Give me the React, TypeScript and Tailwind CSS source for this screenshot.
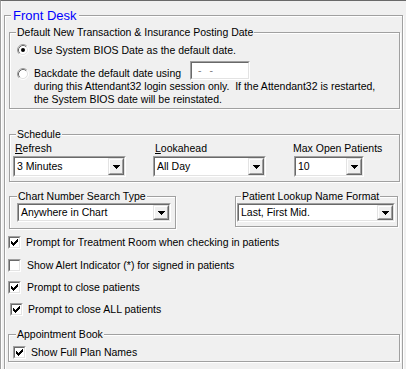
import React from "react";

const sunkenOuter = "border border-t-[#a0a0a0] border-l-[#a0a0a0] border-r-white border-b-white";
const sunkenInner = "border border-t-[#696969] border-l-[#696969] border-r-[#e3e3e3] border-b-[#e3e3e3]";
const etched = "border border-[#a0a0a0] shadow-[1px_1px_0_#fff,inset_1px_1px_0_#fff]";

function Group({ title, className, legendClass, children }: { title: string; className: string; legendClass: string; children: React.ReactNode }) {
  return (
    <div className={etched + " " + className}>
      <div className={"w-fit h-[13px] -mt-[7px] bg-[#f0f0f0] px-[1px] leading-[13px] " + legendClass}>{title}</div>
      {children}
    </div>
  );
}

function Radio({ checked, className }: { checked?: boolean; className?: string }) {
  return (
    <svg width="12" height="12" viewBox="0 0 12 12" className={"shrink-0 " + (className || "")}>
      <circle cx="6" cy="6" r="4.5" fill="#fff" />
      <path d="M2.11 9.89 A5.5 5.5 0 0 1 9.89 2.11" fill="none" stroke="#a0a0a0" />
      <path d="M9.89 2.11 A5.5 5.5 0 0 1 2.11 9.89" fill="none" stroke="#fff" />
      <path d="M2.82 9.18 A4.5 4.5 0 0 1 9.18 2.82" fill="none" stroke="#696969" />
      <path d="M9.18 2.82 A4.5 4.5 0 0 1 2.82 9.18" fill="none" stroke="#e3e3e3" />
      {checked && <circle cx="6" cy="6" r="2" fill="#000" />}
    </svg>
  );
}

// classic 7x7 tick, one 3px run per column
const tick = [2, 3, 4, 3, 2, 1, 0];

function CheckBox({ checked, className }: { checked?: boolean; className?: string }) {
  return (
    <div className={"w-[13px] h-[13px] shrink-0 " + sunkenOuter + " " + (className || "")}>
      <div className={"w-full h-full bg-white flex items-center justify-center " + sunkenInner}>
        {checked && (
          <svg width="7" height="7" viewBox="0 0 7 7" shapeRendering="crispEdges">
            {tick.map((y, x) => (
              <rect key={x} x={x} y={y} width="1" height="3" fill="#000" />
            ))}
          </svg>
        )}
      </div>
    </div>
  );
}

function Combo({ text, className }: { text: string; className: string }) {
  return (
    <div className={"flex " + sunkenOuter + " " + className}>
      <div className={"flex flex-1 bg-white " + sunkenInner}>
        <span className="flex-1 pl-[2px] self-center whitespace-nowrap">{text}</span>
        <div className="w-[16px] h-full bg-[#f0f0f0] border border-t-[#e3e3e3] border-l-[#e3e3e3] border-r-[#696969] border-b-[#696969]">
          <div className="w-full h-full flex items-center justify-center border border-t-white border-l-white border-r-[#a0a0a0] border-b-[#a0a0a0]">
            <svg width="7" height="4" viewBox="0 0 7 4" shapeRendering="crispEdges">
              <rect x="0" y="0" width="7" height="1" fill="#000" />
              <rect x="1" y="1" width="5" height="1" fill="#000" />
              <rect x="2" y="2" width="3" height="1" fill="#000" />
              <rect x="3" y="3" width="1" height="1" fill="#000" />
            </svg>
          </div>
        </div>
      </div>
    </div>
  );
}

function CheckRow({ label, checked, className, gap }: { label: string; checked?: boolean; className: string; gap: string }) {
  return (
    <div className={"flex items-center h-[13px] " + className}>
      <CheckBox checked={checked} />
      <span className={"whitespace-nowrap " + gap}>{label}</span>
    </div>
  );
}

export default function App() {
  return (
    <div className="w-[406px] h-[369px] overflow-hidden bg-[#f0f0f0] border-t border-l border-t-[#696969] border-l-[#a0a0a0] shadow-[inset_1px_0_0_#fff] font-['Liberation_Sans',Arial,sans-serif] text-[10.5px] leading-[13px] text-black">
      <div className={"ml-[3px] mt-[14px] w-[399px] pb-[40px] " + etched}>
        <div className="w-fit h-[15px] -mt-[8px] ml-[6px] bg-[#f0f0f0] px-[2px] text-[13px] leading-[15px] text-[#0000ff]">Front Desk</div>

        <Group title="Default New Transaction & Insurance Posting Date" className="mt-[9px] ml-[4px] mr-[2px] pb-[2px]" legendClass="ml-[6px]">
          <div className="mt-[5px] flex">
            <Radio checked className="ml-[7px]" />
            <span className="ml-[5px]">Use System BIOS Date as the default date.</span>
          </div>
          <div className="mt-[10px] flex">
            <Radio className="ml-[7px] mt-[1px]" />
            <div className="ml-[5px]">
              <div className="flex h-[13px]">
                <span className="w-[156px] whitespace-nowrap">Backdate the default date using</span>
                <div className={"-mt-[6px] h-[19px] w-[60px] " + sunkenOuter}>
                  <div className={"w-full h-full bg-white flex items-center gap-[8px] pl-[6px] text-[#808080] " + sunkenInner}>
                    <span>-</span>
                    <span>-</span>
                  </div>
                </div>
              </div>
              <div className="whitespace-nowrap">{"during this Attendant32 login session only.\u00a0 If the Attendant32 is restarted,"}</div>
              <div className="whitespace-nowrap">the System BIOS date will be reinstated.</div>
            </div>
          </div>
        </Group>

        <Group title="Schedule" className="mt-[25px] ml-[4px] mr-[2px] pb-[4px]" legendClass="ml-[6px]">
          <div className="mt-[1px] flex">
            <div className="ml-[3px] w-[113px]">
              <div className="pl-[2px] h-[13px]"><span className="underline">R</span>efresh</div>
              <Combo text="3 Minutes" className="mt-[1px] w-[113px] h-[21px]" />
            </div>
            <div className="ml-[27px] w-[113px]">
              <div className="pl-[2px] h-[13px]"><span className="underline">L</span>ookahead</div>
              <Combo text="All Day" className="mt-[1px] w-[113px] h-[21px]" />
            </div>
            <div className="ml-[28px] w-[70px]">
              <div className="-ml-[1px] h-[13px] whitespace-nowrap">Max Open Patients</div>
              <Combo text="10" className="mt-[1px] w-[70px] h-[21px]" />
            </div>
          </div>
        </Group>

        <div className="mt-[14px] ml-[4px] flex items-start">
          <Group title="Chart Number Search Type" className="w-[167px] pb-[6px]" legendClass="ml-[7px]">
            <Combo text="Anywhere in Chart" className="ml-[7px] w-[154px] h-[19px]" />
          </Group>
          <Group title="Patient Lookup Name Format" className="ml-[59px] w-[163px] pb-[4px]" legendClass="ml-[5px]">
            <Combo text="Last, First Mid." className="ml-[1px] w-[158px] h-[19px]" />
          </Group>
        </div>

        <CheckRow checked label="Prompt for Treatment Room when checking in patients" className="mt-[7px] ml-[3px]" gap="ml-[5px]" />
        <CheckRow label="Show Alert Indicator (*) for signed in patients" className="mt-[10px] ml-[3px]" gap="ml-[6px]" />
        <CheckRow checked label="Prompt to close patients" className="mt-[9px] ml-[3px]" gap="ml-[6px]" />
        <CheckRow checked label="Prompt to close ALL patients" className="mt-[9px] ml-[5px]" gap="ml-[5px]" />

        <Group title="Appointment Book" className="mt-[18px] ml-[3px] mr-[2px] pb-[2px]" legendClass="ml-[7px]">
          <CheckRow checked label="Show Full Plan Names" className="mt-[5px] ml-[4px]" gap="ml-[5px]" />
        </Group>
      </div>
    </div>
  );
}
